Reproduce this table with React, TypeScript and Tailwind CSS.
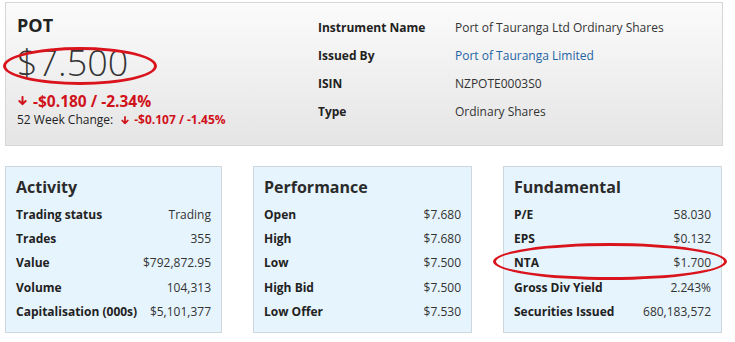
const activity = [
  ['Trading status', 'Trading'],
  ['Trades', '355'],
  ['Value', '$792,872.95'],
  ['Volume', '104,313'],
  ['Capitalisation (000s)', '$5,101,377'],
]

const performance = [
  ['Open', '$7.680'],
  ['High', '$7.680'],
  ['Low', '$7.500'],
  ['High Bid', '$7.500'],
  ['Low Offer', '$7.530'],
]

const fundamental = [
  ['P/E', '58.030'],
  ['EPS', '$0.132'],
  ['NTA', '$1.700'],
  ['Gross Div Yield', '2.243%'],
  ['Securities Issued', '680,183,572'],
]

function DownArrow({ size = 9 }: { size?: number }) {
  return (
    <svg width={size} height={size + 1} viewBox="0 0 10 11" className="shrink-0">
      <path d="M5 1v8M1.5 5.5L5 9l3.5-3.5" fill="none" stroke="#d0121b" strokeWidth="2.2" strokeLinecap="round" strokeLinejoin="round" />
    </svg>
  )
}

function StatBox({ title, rows }: { title: string; rows: string[][] }) {
  return (
    <div className="h-[167px] border border-[#cfd6dc] bg-[#e6f4fd] px-[10px] pt-[9px]">
      <h3 className="text-[16px] font-bold leading-[22px] text-[#2b2b2b]">{title}</h3>
      <div className="mt-[5px] flex flex-col">
        {rows.map(([label, value]) => (
          <div key={label} className="flex h-[24.2px] items-center justify-between text-[12px]">
            <span className="font-bold text-[#222]">{label}</span>
            <span className="text-[#333]">{value}</span>
          </div>
        ))}
      </div>
    </div>
  )
}

export default function App() {
  return (
    <div className="relative h-[342px] w-[735px] bg-white pl-[5px] pt-[2px] font-['Open_Sans',sans-serif]">
      {/* Header */}
      <div className="flex h-[144px] w-[718px] border border-[#d6d6d6] bg-gradient-to-b from-[#fbfbfb] to-[#e5e5e5]">
        <div className="w-[300px] pl-[11px] pt-[10px]">
          <h1 className="text-[18px] font-bold leading-[24px] text-[#222]">POT</h1>
          <div className="mt-[3px] text-[36px] font-light leading-[46px] text-[#333]">$7.500</div>
          <div className="mt-[5px] flex items-center gap-[6px] pl-[1px] text-[15.5px] font-bold leading-[20px] text-[#d0121b]">
            <DownArrow />
            <span>-$0.180 / -2.34%</span>
          </div>
          <div className="mt-[1px] flex items-center text-[12px] leading-[16px] text-[#222]">
            <span>52 Week Change:</span>
            <span className="ml-[8px] flex items-center gap-[5px] font-bold text-[#d0121b]">
              <DownArrow size={8} />
              <span>-$0.107 / -1.45%</span>
            </span>
          </div>
        </div>
        <div className="pl-[12px] pt-[11px] text-[12px] text-[#222]">
          {[
            ['Instrument Name', 'Port of Tauranga Ltd Ordinary Shares'],
            ['Issued By', 'Port of Tauranga Limited'],
            ['ISIN', 'NZPOTE0003S0'],
            ['Type', 'Ordinary Shares'],
          ].map(([label, value]) => (
            <div key={label} className="flex h-[28px] items-center">
              <span className="w-[137px] font-bold">{label}</span>
              <span className={label === 'Issued By' ? 'text-[#1f64a3]' : 'text-[#333]'}>{value}</span>
            </div>
          ))}
        </div>
      </div>

      {/* Stat boxes */}
      <div className="mt-[20px] grid w-[718px] grid-cols-[217px_219px_219px] gap-[31px]">
        <StatBox title="Activity" rows={activity} />
        <StatBox title="Performance" rows={performance} />
        <StatBox title="Fundamental" rows={fundamental} />
      </div>

      {/* Highlight rings */}
      <div className="pointer-events-none absolute left-[3px] top-[47px] h-[38px] w-[154px] rounded-[50%] border-[3px] border-[#d9141c]" />
      <div className="pointer-events-none absolute left-[493px] top-[243px] h-[37px] w-[234px] rounded-[50%] border-[3px] border-[#d9141c]" />
    </div>
  )
}
